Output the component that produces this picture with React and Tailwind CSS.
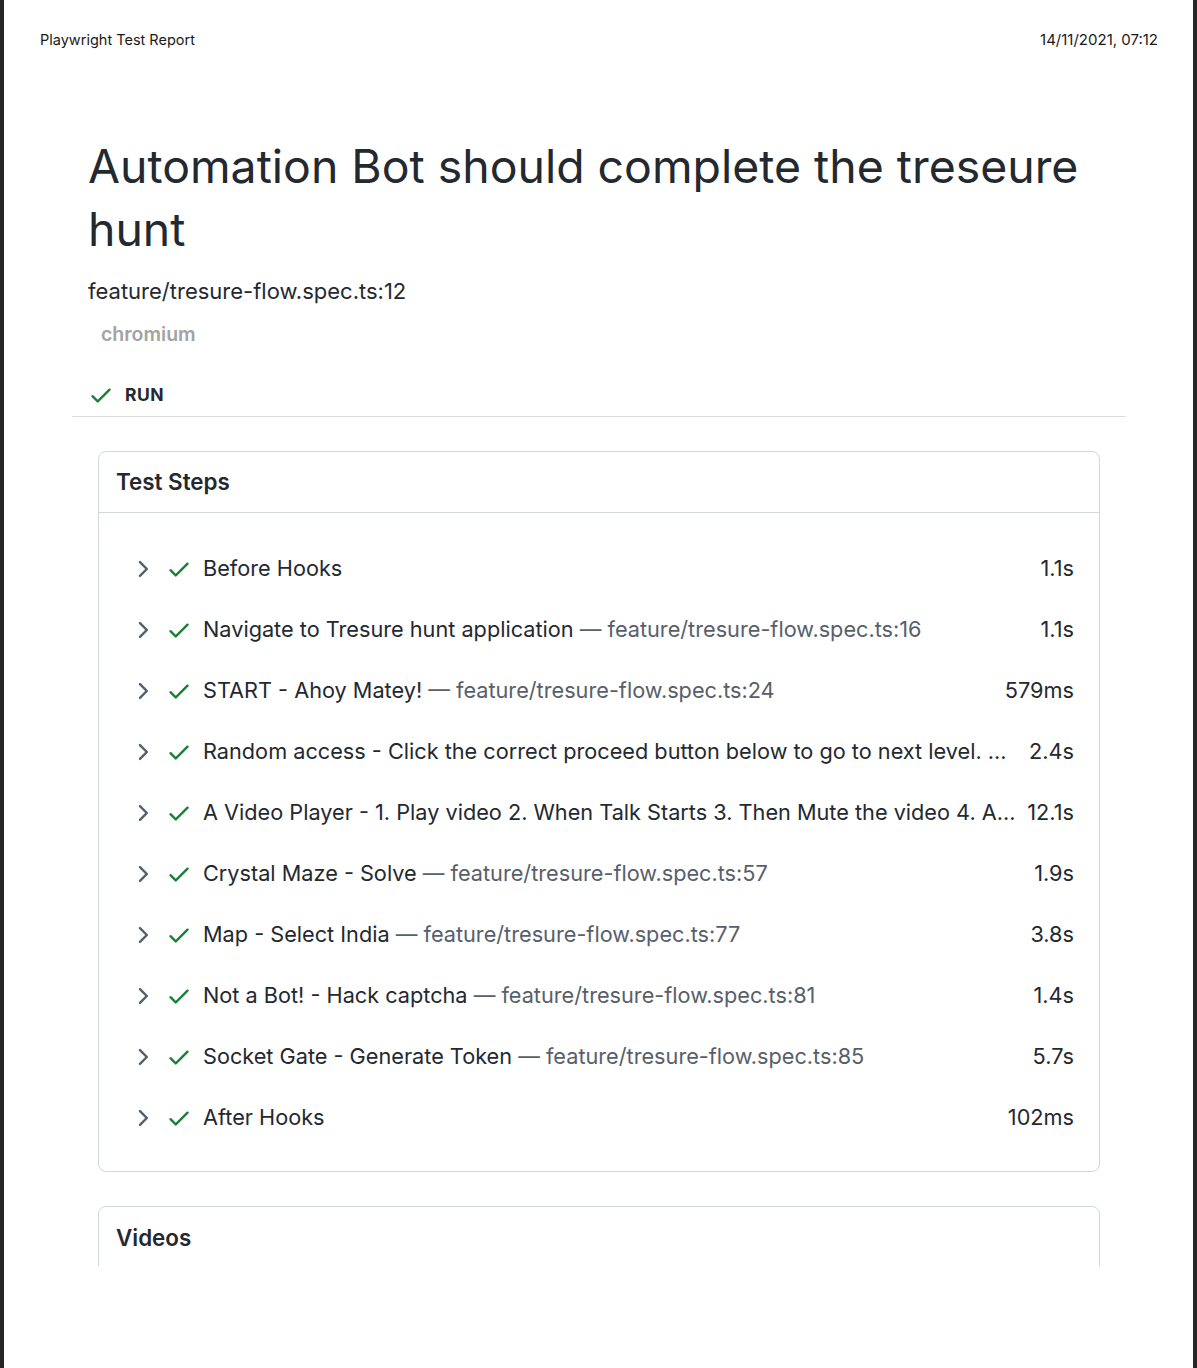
import React from "react";

const CheckIcon = ({ className = "" }) => (
  <svg viewBox="0 0 16 16" width="26" height="26" className={className} fill="currentColor">
    <path d="M13.78 4.22a.75.75 0 010 1.06l-7.25 7.25a.75.75 0 01-1.06 0L2.22 9.28a.75.75 0 011.06-1.06L6 10.94l6.72-6.72a.75.75 0 011.06 0z" />
  </svg>
);

const ChevronIcon = ({ className = "" }) => (
  <svg viewBox="0 0 16 16" width="26" height="26" className={className} fill="currentColor">
    <path d="M6.22 3.22a.75.75 0 011.06 0l4.25 4.25a.75.75 0 010 1.06l-4.25 4.25a.75.75 0 01-1.06-1.06L9.94 8 6.22 4.28a.75.75 0 010-1.06z" />
  </svg>
);

const steps = [
  { title: "Before Hooks", duration: "1.1s" },
  { title: "Navigate to Tresure hunt application", location: "feature/tresure-flow.spec.ts:16", duration: "1.1s" },
  { title: "START - Ahoy Matey!", location: "feature/tresure-flow.spec.ts:24", duration: "579ms" },
  { title: "Random access - Click the correct proceed button below to go to next level. ...", duration: "2.4s" },
  { title: "A Video Player - 1. Play video 2. When Talk Starts 3. Then Mute the video 4. A...", duration: "12.1s" },
  { title: "Crystal Maze - Solve", location: "feature/tresure-flow.spec.ts:57", duration: "1.9s" },
  { title: "Map - Select India", location: "feature/tresure-flow.spec.ts:77", duration: "3.8s" },
  { title: "Not a Bot! - Hack captcha", location: "feature/tresure-flow.spec.ts:81", duration: "1.4s" },
  { title: "Socket Gate - Generate Token", location: "feature/tresure-flow.spec.ts:85", duration: "5.7s" },
  { title: "After Hooks", duration: "102ms" },
];

export default function App() {
  return (
    <div className="flex h-[1368px] w-full bg-white text-[#24292f] font-['Inter',sans-serif]">
      <div className="w-[4px] bg-[#262626]" />
      <div className="flex-1 flex flex-col">
        <div className="h-[1266px] overflow-hidden">
          {/* print header */}
          <div className="flex h-[80px] items-center justify-between pl-[36px] pr-[35px] text-[14.5px] text-[#1a1a1a]">
            <span>Playwright Test Report</span>
            <span className="text-[15px]">14/11/2021, 07:12</span>
          </div>

          <div className="ml-[68px] w-[1054px]">
            <h1 className="mt-[55px] px-4 text-[46.4px] leading-[63px] font-normal">
              Automation Bot should complete the treseure hunt
            </h1>
            <div className="mt-[15px] px-4 text-[22px] leading-[30px]">feature/tresure-flow.spec.ts:12</div>
            <div className="mt-[15px] pl-[29px] text-[19.5px] leading-[26px] font-semibold text-[#a3a3a3]">chromium</div>

            <div className="mt-[35px] flex h-[26px] items-center pl-[16px]">
              <CheckIcon className="text-[#1a7f37]" />
              <span className="ml-[11px] text-[17.5px] font-bold tracking-wide">RUN</span>
            </div>
            <div className="mt-[8px] h-px bg-[#d8dee4]" />

            {/* Test steps */}
            <div className="mx-[26px] mt-[34px] rounded-lg border border-[#d0d7de]">
              <div className="flex h-[61px] items-center border-b border-[#d0d7de] pl-[17px] text-[22.4px] font-semibold">
                Test Steps
              </div>
              <div className="pt-[25px] pb-[23px]">
                {steps.map((s) => (
                  <div key={s.title} className="flex h-[61px] items-center pl-[30px] pr-[25px] text-[21.7px]">
                    <ChevronIcon className="shrink-0 text-[#57606a]" />
                    <CheckIcon className="ml-[11px] shrink-0 text-[#1a7f37]" />
                    <span className="ml-[11px] min-w-0 flex-1 truncate">
                      {s.title}
                      {s.location && <span className="text-[#57606a]"> — {s.location}</span>}
                    </span>
                    <span className="ml-[4px] shrink-0">{s.duration}</span>
                  </div>
                ))}
              </div>
            </div>

            {/* Videos */}
            <div className="mx-[26px] mt-[34px] h-[200px] rounded-lg border border-[#d0d7de]">
              <div className="flex h-[61px] items-center pl-[17px] text-[22.4px] font-semibold">Videos</div>
            </div>
          </div>
        </div>
      </div>
      <div className="w-[4px] bg-[#262626]" />
    </div>
  );
}
